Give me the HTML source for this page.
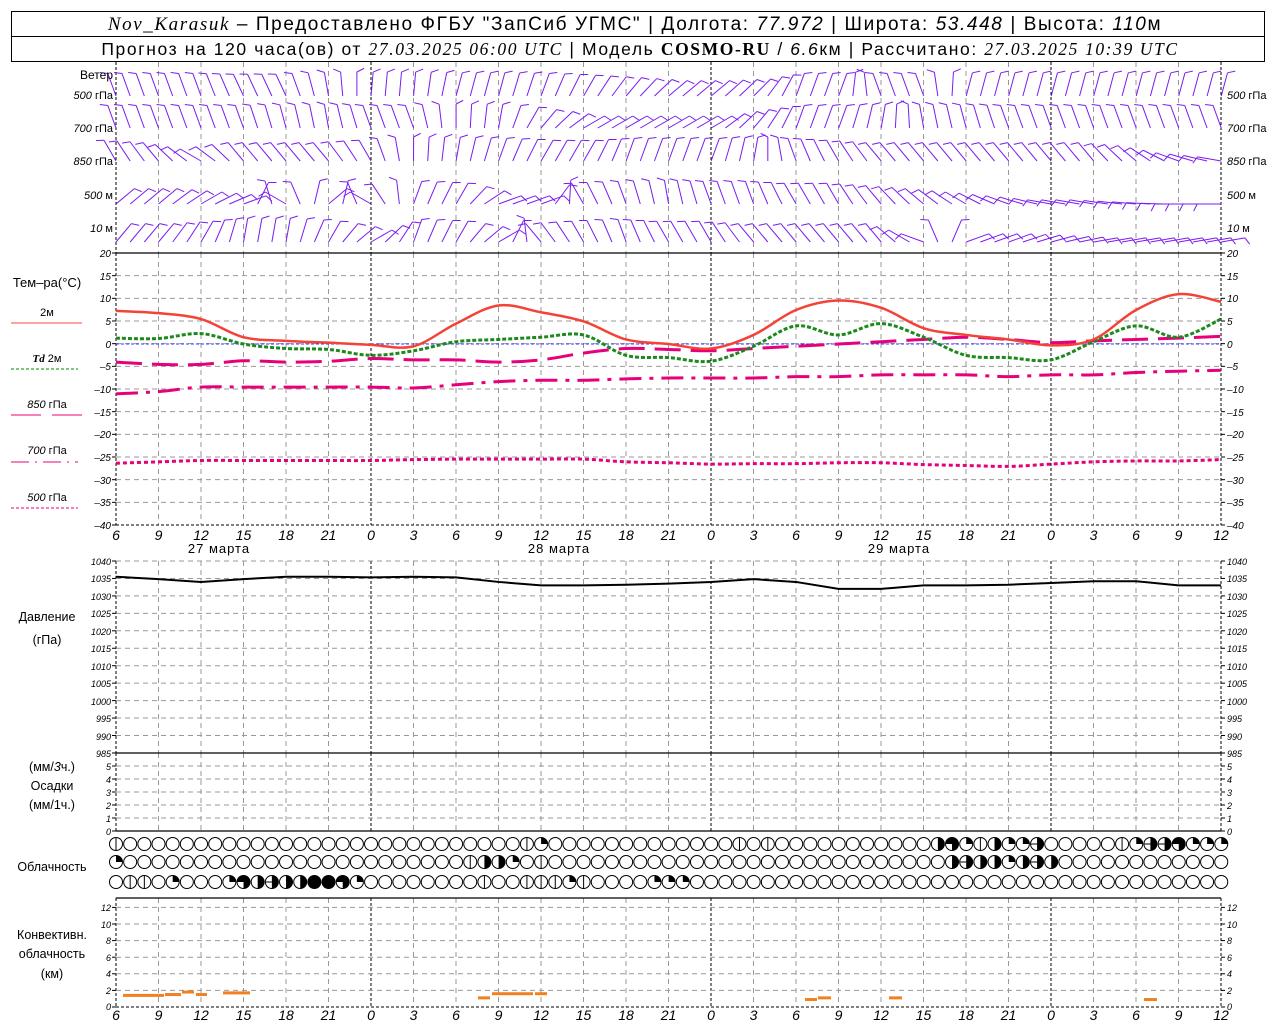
<!DOCTYPE html>
<html><head><meta charset="utf-8">
<style>
html,body{margin:0;padding:0;background:#fff;}
svg{display:block;}
text{font-family:"Liberation Sans",sans-serif;}
.n{font-family:"Liberation Sans",sans-serif;font-style:italic;font-size:10px;fill:#000;}
.h{font-family:"Liberation Sans",sans-serif;font-style:italic;font-size:14px;fill:#000;text-anchor:middle;}
.l{font-size:12px;fill:#000;}
</style></head><body>
<svg id="s" width="1280" height="1024" xmlns="http://www.w3.org/2000/svg">
<rect x="0" y="0" width="1280" height="1024" fill="#fff"/>
<rect x="11.5" y="11.5" width="1253" height="50" fill="none" stroke="#000" stroke-width="1"/>
<line x1="11" y1="36.5" x2="1265" y2="36.5" stroke="#000"/>
<text x="635" y="30" text-anchor="middle" style="font-size:19px;letter-spacing:1.6px"><tspan style="font-family:'Liberation Serif',serif;font-style:italic">Nov_Karasuk</tspan> – Предоставлено ФГБУ "ЗапСиб УГМС" | Долгота: <tspan style="font-style:italic">77.972</tspan> | Широта: <tspan style="font-style:italic">53.448</tspan> | Высота: <tspan style="font-style:italic">110</tspan>м</text>
<text x="640" y="55" text-anchor="middle" style="font-size:17.5px;letter-spacing:1.6px">Прогноз на 120 часа(ов) от <tspan style="font-family:'Liberation Serif',serif;font-style:italic">27.03.2025 06:00 UTC</tspan>  | Модель <tspan style="font-family:'Liberation Serif',serif;font-weight:bold">COSMO-RU</tspan> / <tspan style="font-style:italic">6.6</tspan>км | Рассчитано: <tspan style="font-family:'Liberation Serif',serif;font-style:italic">27.03.2025 10:39 UTC</tspan></text>

<g id="g"></g>

<g class="l" style="font-size:11px">
<text x="113" y="79" text-anchor="end" style="font-size:12px">Ветер</text>
<text x="113" y="99" text-anchor="end"><tspan font-style="italic">500</tspan> гПа</text>
<text x="113" y="132" text-anchor="end"><tspan font-style="italic">700</tspan> гПа</text>
<text x="113" y="165" text-anchor="end"><tspan font-style="italic">850</tspan> гПа</text>
<text x="113" y="199" text-anchor="end"><tspan font-style="italic">500</tspan> м</text>
<text x="113" y="232" text-anchor="end"><tspan font-style="italic">10</tspan>   м</text>
<text x="1227" y="99"><tspan font-style="italic">500</tspan> гПа</text>
<text x="1227" y="132"><tspan font-style="italic">700</tspan> гПа</text>
<text x="1227" y="165"><tspan font-style="italic">850</tspan> гПа</text>
<text x="1227" y="199"><tspan font-style="italic">500</tspan> м</text>
<text x="1227" y="232"><tspan font-style="italic">10</tspan>   м</text>
</g>
<g class="l">
<text x="47" y="287" text-anchor="middle" style="font-size:13px">Тем–ра(°C)</text>
<text x="47" y="316" text-anchor="middle" style="font-size:11px">2м</text>
<line x1="11" y1="323" x2="82" y2="323" stroke="#f44" stroke-width="1"/>
<text x="47" y="362" text-anchor="middle" style="font-size:11px"><tspan font-style="italic" font-weight="bold" font-family="Liberation Serif">Td</tspan>  2м</text>
<line x1="11" y1="369" x2="78" y2="369" stroke="#080" stroke-dasharray="3,2"/>
<text x="47" y="408" text-anchor="middle" style="font-size:11px"><tspan font-style="italic">850</tspan> гПа</text>
<line x1="11" y1="415" x2="82" y2="415" stroke="#e07" stroke-dasharray="30,11"/>
<text x="47" y="454" text-anchor="middle" style="font-size:11px"><tspan font-style="italic">700</tspan> гПа</text>
<line x1="11" y1="462" x2="78" y2="462" stroke="#e07" stroke-dasharray="18,6,2,6"/>
<text x="47" y="501" text-anchor="middle" style="font-size:11px"><tspan font-style="italic">500</tspan> гПа</text>
<line x1="11" y1="508" x2="78" y2="508" stroke="#e07" stroke-dasharray="3,2"/>
<text x="47" y="621" text-anchor="middle" style="font-size:12.5px">Давление</text>
<text x="47" y="644" text-anchor="middle" style="font-size:12.5px">(гПа)</text>
<text x="52" y="771" text-anchor="middle" style="font-size:12.5px">(мм/<tspan font-style="italic">3</tspan>ч.)</text>
<text x="52" y="790" text-anchor="middle" style="font-size:12.5px">Осадки</text>
<text x="52" y="809" text-anchor="middle" style="font-size:12.5px">(мм/1ч.)</text>
<text x="52" y="871" text-anchor="middle" style="font-size:12.5px">Облачность</text>
<text x="52" y="939" text-anchor="middle" style="font-size:12.5px">Конвективн.</text>
<text x="52" y="958" text-anchor="middle" style="font-size:12.5px">облачность</text>
<text x="52" y="978" text-anchor="middle" style="font-size:12.5px">(км)</text>
</g>
<g class="h">
<text x="116" y="540">6</text><text x="158.5" y="540">9</text><text x="201" y="540">12</text><text x="243.5" y="540">15</text><text x="286" y="540">18</text><text x="328.5" y="540">21</text><text x="371" y="540">0</text><text x="413.5" y="540">3</text><text x="456" y="540">6</text><text x="498.5" y="540">9</text><text x="541" y="540">12</text><text x="583.5" y="540">15</text><text x="626" y="540">18</text><text x="668.5" y="540">21</text><text x="711" y="540">0</text><text x="753.5" y="540">3</text><text x="796" y="540">6</text><text x="838.5" y="540">9</text><text x="881" y="540">12</text><text x="923.5" y="540">15</text><text x="966" y="540">18</text><text x="1008.5" y="540">21</text><text x="1051" y="540">0</text><text x="1093.5" y="540">3</text><text x="1136" y="540">6</text><text x="1178.5" y="540">9</text><text x="1221" y="540">12</text>
</g>
<g class="h">
<text x="116" y="1020">6</text><text x="158.5" y="1020">9</text><text x="201" y="1020">12</text><text x="243.5" y="1020">15</text><text x="286" y="1020">18</text><text x="328.5" y="1020">21</text><text x="371" y="1020">0</text><text x="413.5" y="1020">3</text><text x="456" y="1020">6</text><text x="498.5" y="1020">9</text><text x="541" y="1020">12</text><text x="583.5" y="1020">15</text><text x="626" y="1020">18</text><text x="668.5" y="1020">21</text><text x="711" y="1020">0</text><text x="753.5" y="1020">3</text><text x="796" y="1020">6</text><text x="838.5" y="1020">9</text><text x="881" y="1020">12</text><text x="923.5" y="1020">15</text><text x="966" y="1020">18</text><text x="1008.5" y="1020">21</text><text x="1051" y="1020">0</text><text x="1093.5" y="1020">3</text><text x="1136" y="1020">6</text><text x="1178.5" y="1020">9</text><text x="1221" y="1020">12</text>
</g>
<g style="font-size:13px;fill:#000;letter-spacing:1px" text-anchor="middle">
<text x="219" y="553">27 марта</text><text x="559" y="553">28 марта</text><text x="899" y="553">29 марта</text>
</g>
<g class="n" text-anchor="end">
<text x="111" y="257">20</text><text x="111" y="280">15</text><text x="111" y="302">10</text><text x="111" y="325">5</text><text x="111" y="348">0</text><text x="111" y="370">–5</text><text x="111" y="393">–10</text><text x="111" y="416">–15</text><text x="111" y="438">–20</text><text x="111" y="461">–25</text><text x="111" y="484">–30</text><text x="111" y="506">–35</text><text x="111" y="529">–40</text>
</g>
<g class="n">
<text x="1227" y="257">20</text><text x="1227" y="280">15</text><text x="1227" y="302">10</text><text x="1227" y="325">5</text><text x="1227" y="348">0</text><text x="1227" y="370">–5</text><text x="1227" y="393">–10</text><text x="1227" y="416">–15</text><text x="1227" y="438">–20</text><text x="1227" y="461">–25</text><text x="1227" y="484">–30</text><text x="1227" y="506">–35</text><text x="1227" y="529">–40</text>
</g>
<g class="n" text-anchor="end" style="font-size:9px">
<text x="111" y="565">1040</text><text x="111" y="582">1035</text><text x="111" y="600">1030</text><text x="111" y="617">1025</text><text x="111" y="635">1020</text><text x="111" y="652">1015</text><text x="111" y="670">1010</text><text x="111" y="687">1005</text><text x="111" y="705">1000</text><text x="111" y="722">995</text><text x="111" y="740">990</text><text x="111" y="757">985</text>
</g>
<g class="n" style="font-size:9px">
<text x="1227" y="565">1040</text><text x="1227" y="582">1035</text><text x="1227" y="600">1030</text><text x="1227" y="617">1025</text><text x="1227" y="635">1020</text><text x="1227" y="652">1015</text><text x="1227" y="670">1010</text><text x="1227" y="687">1005</text><text x="1227" y="705">1000</text><text x="1227" y="722">995</text><text x="1227" y="740">990</text><text x="1227" y="757">985</text>
</g>
<g class="n" text-anchor="end" style="font-size:9px">
<text x="111" y="770">5</text><text x="111" y="783">4</text><text x="111" y="796">3</text><text x="111" y="809">2</text><text x="111" y="822">1</text><text x="111" y="835">0</text>
</g>
<g class="n" style="font-size:9px">
<text x="1227" y="770">5</text><text x="1227" y="783">4</text><text x="1227" y="796">3</text><text x="1227" y="809">2</text><text x="1227" y="822">1</text><text x="1227" y="835">0</text>
</g>
<g class="n" text-anchor="end" style="font-size:9px">
<text x="111" y="911">12</text><text x="111" y="928">10</text><text x="111" y="944">8</text><text x="111" y="961">6</text><text x="111" y="977">4</text><text x="111" y="994">2</text><text x="111" y="1010">0</text>
</g>
<g class="n" style="font-size:9px">
<text x="1227" y="911">12</text><text x="1227" y="928">10</text><text x="1227" y="944">8</text><text x="1227" y="961">6</text><text x="1227" y="977">4</text><text x="1227" y="994">2</text><text x="1227" y="1010">0</text>
</g>
</svg>
<script>
(function(){
var NS="http://www.w3.org/2000/svg",g=document.getElementById("g");
function el(t,a){var e=document.createElementNS(NS,t);for(var k in a)e.setAttribute(k,a[k]);g.appendChild(e);return e;}
function ln(x1,y1,x2,y2,s,w,d){var a={x1:x1,y1:y1,x2:x2,y2:y2,stroke:s,"stroke-width":w||1};if(d)a["stroke-dasharray"]=d;return el("line",a);}
var X0=116,DX=42.5,X1=1221;
function hx(i){return X0+DX*i;}
var panels=[[62,253],[253,525],[561,753],[753,831],[898,1007]];
panels.forEach(function(p){
 for(var i=0;i<=26;i++){var x=hx(i);var mid=(i==6||i==14||i==22);var edge=(i==0||i==26);
  if(edge||mid) ln(x,p[0],x,p[1],"#000",1,"3,2");
  else ln(x,p[0],x,p[1],"#999",1,"5,4");}
});
function hgrid(y){ln(X0,y,X1,y,"#999",1,"5,4");}
for(var k=1;k<12;k++)hgrid(253+22.667*k);
for(var k=0;k<11;k++)hgrid(561+17.45*k);
for(var k=1;k<6;k++)hgrid(831-13*k);
for(var k=1;k<=6;k++)hgrid(1007-16.6*k);
function ticks(y){ln(X0-4,y,X0,y,"#000");ln(X1,y,X1+4,y,"#000");}
for(var k=0;k<=12;k++)ticks(253+22.667*k);
for(var k=0;k<=11;k++)ticks(561+17.45*k);
for(var k=0;k<=6;k++)ticks(831-13*k);
for(var k=0;k<=6;k++)ticks(1007-16.6*k);
ln(X0,253,X1,253,"#000",1.2);ln(X0,753,X1,753,"#000",1.2);ln(X0,831,X1,831,"#000",1.2);
ln(X0,898,X1,898,"#000",1.2);ln(X0,1007,X1,1007,"#000",1,"3,2");ln(X0,525,X1,525,"#000",1,"3,2");
ln(X0,344,X1,344,"#33f",1,"3,2");
function ty(t){return 344-t*4.533;}
function curve(arr,col,w,dash){
 var pts=[];for(var i=0;i<arr.length;i++)pts.push([hx(i),ty(arr[i])]);
 var d="M"+pts[0][0]+","+pts[0][1];
 for(var i=0;i<pts.length-1;i++){var p0=pts[Math.max(0,i-1)],p1=pts[i],p2=pts[i+1],p3=pts[Math.min(pts.length-1,i+2)];
  d+=" C"+(p1[0]+(p2[0]-p0[0])/6)+","+(p1[1]+(p2[1]-p0[1])/6)+" "+(p2[0]-(p3[0]-p1[0])/6)+","+(p2[1]-(p3[1]-p1[1])/6)+" "+p2[0]+","+p2[1];}
 var a={d:d,fill:"none",stroke:col,"stroke-width":w};if(dash)a["stroke-dasharray"]=dash;el("path",a);}
curve([-26.3,-26,-25.7,-25.7,-25.7,-25.7,-25.7,-25.5,-25.4,-25.4,-25.4,-25.4,-26,-26.2,-26.5,-26.4,-26.4,-26.2,-26.2,-26.6,-26.8,-27,-26.5,-26,-25.8,-25.8,-25.5],"#e6007a",3,"4,3");
curve([-11,-10.5,-9.5,-9.5,-9.5,-9.5,-9.5,-9.7,-9,-8.3,-8,-8,-7.7,-7.5,-7.5,-7.5,-7.2,-7.2,-6.8,-6.8,-6.8,-7.2,-6.8,-6.8,-6.3,-6,-5.8],"#e6007a",3,"22,8,4,8");
curve([-4,-4.5,-4.5,-3.7,-4,-3.8,-3.2,-3.5,-3.5,-4,-3.5,-2,-1,-1.2,-1.5,-1,-0.5,0,0.5,1,1.5,1,0.3,0.7,1,1.3,1.7],"#e6007a",3,"26,10");
curve([1.3,1.2,2.3,0,-1,-1.2,-2.5,-1.5,0.5,1,1.5,2,-2.5,-3,-3.8,-0.5,4,2,4.5,1.5,-2.5,-3,-3.5,0.5,4,1.5,5.5],"#1a8a1a",3,"4,2");
curve([7.3,6.8,5.5,1.5,0.7,0.3,-0.2,-0.5,4.5,8.5,7,5,1,0,-1,2,7.5,9.6,8,3.5,2,1,-0.3,1,7.5,11,9.3],"#f44336",2.5);
(function(){var v=[1035.5,1034.8,1034,1034.8,1035.5,1035.5,1035.3,1035.5,1035.3,1034,1033,1033,1033.2,1033.5,1034,1034.8,1034,1032,1032,1033,1033,1033.2,1033.7,1034.2,1034.2,1033,1033];
 var d="";for(var i=0;i<v.length;i++){d+=(i?"L":"M")+hx(i)+","+(561+(1040-v[i])*3.49)+" ";}el("path",{d:d,fill:"none",stroke:"#000","stroke-width":2});})();
[[123,165,1.4],[165,182,1.5],[182,195,1.8],[196,208,1.5],[223,251,1.7],[478,491,1.1],[492,534,1.6],[535,548,1.6],[805,818,0.9],[818,832,1.1],[889,903,1.1],[1144,1158,0.9]].forEach(function(b){
 el("rect",{x:b[0],y:1007-b[2]*8.3-1.5,width:b[1]-b[0]-1,height:3,fill:"#f08020"});});
var SX=14.17,rows=[844,862,882];
var st=[{0:1,29:1,30:2,44:1,46:1,58:3,59:4,60:2,61:1,62:3,63:2,64:2,65:6,71:1,72:2,73:6,74:6,75:4,76:2,77:2,78:2},
{0:2,25:1,26:3,27:3,28:2,30:1,59:3,60:6,61:3,62:3,63:2,64:3,65:6,66:3},
{1:1,2:1,4:2,8:2,9:4,10:3,11:6,12:3,13:3,14:5,15:5,16:4,17:2,26:1,29:1,30:1,31:1,32:2,33:1,38:2,39:2,40:2}];
for(var r=0;r<3;r++)for(var i=0;i<79;i++){var cx=X0+SX*i,cy=rows[r],R=6.5,s=st[r][i]||0;
 if(s==5){el("circle",{cx:cx,cy:cy,r:R,fill:"#000",stroke:"#000"});continue;}
 el("circle",{cx:cx,cy:cy,r:R,fill:"#fff",stroke:"#000","stroke-width":1});
 if(s==1)ln(cx,cy-R,cx,cy+R,"#000");
 if(s==2)el("path",{d:"M"+cx+","+cy+" L"+cx+","+(cy-R)+" A"+R+","+R+" 0 0 1 "+(cx+R)+","+cy+" Z",fill:"#000"});
 if(s==3||s==6)el("path",{d:"M"+cx+","+(cy-R)+" A"+R+","+R+" 0 0 1 "+cx+","+(cy+R)+" Z",fill:"#000"});
 if(s==6)ln(cx-R,cy,cx,cy,"#000");
 if(s==4)el("path",{d:"M"+cx+","+cy+" L"+(cx-R)+","+cy+" A"+R+","+R+" 0 1 1 "+cx+","+(cy+R)+" Z",fill:"#000"});
}
var W=[
 [96,[-20,-20,-20,-25,-25,-10,5,5,15,15,20,30,40,50,50,45,20,20,-20,-20,15,15,15,15,15,15,15]],
 [128,[-20,-20,-20,-20,-15,-10,-20,-20,0,10,40,60,60,60,60,40,20,20,10,-10,-15,-20,-20,-20,-20,-20,-20]],
 [161,[-30,-40,-60,-40,-40,-40,-30,0,10,20,30,30,20,20,20,10,-20,-30,-40,-40,-40,-40,-40,-40,-50,-70,-80]],
 [204,[50,50,60,70,-60,50,-60,20,30,70,70,-30,-20,-10,-20,-20,-30,-30,-40,-50,-60,-70,-80,-80,-85,-90,-90]],
 [242,[40,40,30,10,10,30,60,20,30,60,-40,-30,-20,-30,-30,-40,-40,-40,-40,-70,70,70,75,80,80,80,80]]];
var C="#7a1cf0";
W.forEach(function(row){var yb=row[0],A=row[1];
 for(var i=0;i<79;i++){var f=i/3,k=Math.min(25,Math.floor(f)),t=f-k,ang=A[k]*(1-t)+A[k+1]*t;
  var x=X0+SX*i,rad=ang*Math.PI/180,L=24,tx=x+L*Math.sin(rad),tyy=yb-L*Math.cos(rad);
  ln(x,yb,tx,tyy,C,1);
  var sgn=ang>=0?1:-1,br=rad+sgn*1.1;
  ln(tx,tyy,tx+8*Math.sin(br),tyy-8*Math.cos(br),C,1);
 }});
})();
</script>
</body></html>
